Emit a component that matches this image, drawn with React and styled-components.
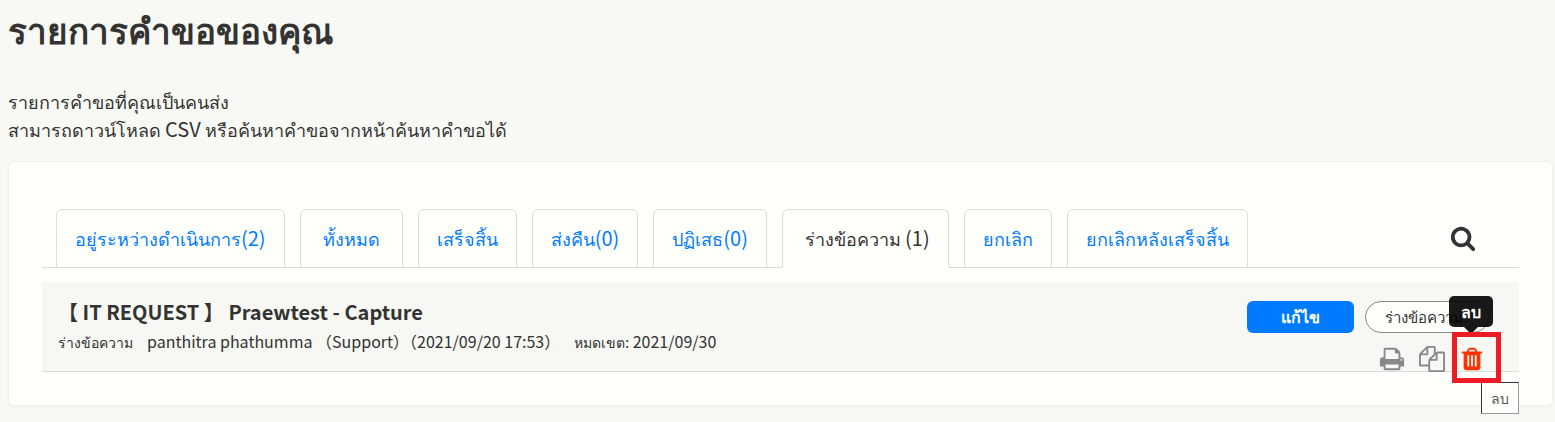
import React, { useState } from 'react'
import styled, { createGlobalStyle } from "styled-components";

const GlobalStyle = createGlobalStyle`
* {
  box-sizing: border-box;
}

body {
  margin: 0;
  background-color: #f8f8f5;
  color: #333331;
  font-family: "Noto Sans CJK JP", "Noto Sans", sans-serif;
  font-size: 18px;
  line-height: 28px;
}
`;

const Container = styled.main`
padding: 5px 2px 16px 8px;
`;

const Title = styled.h1`
margin: 0;
font-size: 35px;
line-height: 48px;
font-weight: 700;
`;

const Lead = styled.p`
margin: 34px 0 18px;
`;

const Latin = styled.span`
font-size: 20px;
line-height: 20px;
`;

const Card = styled.section`
padding: 47px 33px 33px;
background-color: #fffffc;
border: 1px solid #f0f0ec;
border-radius: 6px;
box-shadow: 0 1px 3px rgba(0, 0, 0, 0.03);
`;

const TabBar = styled.div`
display: flex;
align-items: flex-end;
justify-content: space-between;
border-bottom: 1px solid #dcdcd9;
`;

const Tabs = styled.nav`
display: flex;
gap: 15px;
margin-left: 14px;
`;

const Tab = styled.a`
height: 59px;
margin-bottom: -1px;
padding: 14px 18px;
border: 1px solid #dcdcd9;
border-bottom-color: ${(props) => (props.$active ? "#fffffc" : "#dcdcd9")};
border-radius: 6px 6px 0 0;
color: ${(props) => (props.$active ? "#333331" : "#007bff")};
text-decoration: none;
white-space: pre;
`;

const IconButton = styled.button`
display: flex;
padding: 0;
border: none;
background: none;
color: ${(props) => props.$color || "#333331"};
cursor: pointer;
`;

const SearchButton = styled(IconButton)`
margin: 0 43px 16px 0;
`;

const Row = styled.article`
display: flex;
justify-content: space-between;
height: 90px;
margin-top: 14px;
padding: 0 16px;
background-color: #f7f7f4;
border-bottom: 1px solid #dcdcd9;
`;

const RowTitle = styled.h2`
margin: 16px 0 0;
font-size: 20px;
line-height: 28px;
font-weight: 700;
white-space: pre;
`;

const Meta = styled.div`
display: flex;
align-items: baseline;
gap: 14px;
font-size: 16px;
line-height: 30px;
white-space: pre;
`;

const Small = styled.span`
font-size: 14px;
`;

const Actions = styled.div`
display: flex;
flex-direction: column;
align-items: flex-end;
padding: 19px 14px 0 0;
`;

const Buttons = styled.div`
display: flex;
gap: 11px;
`;

const EditButton = styled.button`
width: 107px;
height: 32px;
padding: 0;
border: none;
border-radius: 6px;
background-color: #007bff;
color: #fffffc;
font-family: inherit;
font-size: 16px;
font-weight: 700;
cursor: pointer;
`;

const Status = styled.span`
width: 124px;
height: 32px;
padding-left: 19px;
border: 1px solid #888886;
border-radius: 16px;
background-color: #fffffc;
font-size: 15px;
line-height: 30px;
white-space: nowrap;
`;

const Icons = styled.div`
display: flex;
gap: 14px;
margin: 13px 4px 0 0;
`;

const TrashArea = styled.div`
position: relative;
`;

const Tooltip = styled.span`
position: absolute;
bottom: 45px;
left: 50%;
width: 44px;
margin-left: -23px;
border-radius: 5px;
background-color: rgba(0, 0, 0, 0.9);
color: #fffffc;
font-size: 16px;
font-weight: 700;
line-height: 31px;
text-align: center;

&::after {
  content: "";
  position: absolute;
  top: 100%;
  left: 50%;
  margin-left: -7px;
  border: 7px solid transparent;
  border-top-color: rgba(0, 0, 0, 0.9);
  border-bottom: none;
}
`;

const Highlight = styled.div`
position: absolute;
top: -14px;
left: -7px;
width: 49px;
height: 51px;
border: 5px solid #ed1c24;
pointer-events: none;
`;

const Hint = styled.span`
position: absolute;
top: 36px;
left: 22px;
width: 38px;
border: 1px solid #999997;
border-top-color: #333331;
border-left-color: #333331;
background-color: #fffffc;
color: #575755;
font-size: 14px;
line-height: 30px;
text-align: center;
`;

const paths = {
  search: "M1216 832q0-185-131.5-316.5t-316.5-131.5-316.5 131.5-131.5 316.5 131.5 316.5 316.5 131.5 316.5-131.5 131.5-316.5zm512 832q0 52-38 90t-90 38q-54 0-90-38l-343-342q-179 124-399 124-143 0-273.5-55.5t-225-150-150-225-55.5-273.5 55.5-273.5 150-225 225-150 273.5-55.5 273.5 55.5 225 150 150 225 55.5 273.5q0 220-124 399l343 343q37 37 37 90z",
  print: "M448 1536h896v-256h-896v256zm0-640h896v-384h-160q-40 0-68-28t-28-68v-160h-640v640zm1152 64q0-26-19-45t-45-19-45 19-19 45 19 45 45 19 45-19 19-45zm128 0v416q0 13-9.5 22.5t-22.5 9.5h-224v160q0 40-28 68t-68 28h-960q-40 0-68-28t-28-68v-160h-224q-13 0-22.5-9.5t-9.5-22.5v-416q0-79 56.5-135.5t135.5-56.5h64v-544q0-40 28-68t68-28h672q40 0 88 20t76 48l152 152q28 28 48 76t20 88v256h64q79 0 135.5 56.5t56.5 135.5z",
  copy: "M1696 384q40 0 68 28t28 68v1216q0 40-28 68t-68 28h-960q-40 0-68-28t-28-68v-288h-544q-40 0-68-28t-28-68v-672q0-40 20-88t48-76l408-408q28-28 76-48t88-20h416q40 0 68 28t28 68v328q68-40 128-40h416zm-544 213l-299 299h299v-299zm-640-384l-299 299h299v-299zm196 647l316-316v-416h-384v416q0 40-28 68t-68 28h-416v640h512v-256q0-40 20-88t48-76zm956 804v-1152h-384v416q0 40-28 68t-68 28h-416v640h896z",
  trash: "M704 1376v-704q0-14-9-23t-23-9h-64q-14 0-23 9t-9 23v704q0 14 9 23t23 9h64q14 0 23-9t9-23zm256 0v-704q0-14-9-23t-23-9h-64q-14 0-23 9t-9 23v704q0 14 9 23t23 9h64q14 0 23-9t9-23zm256 0v-704q0-14-9-23t-23-9h-64q-14 0-23 9t-9 23v704q0 14 9 23t23 9h64q14 0 23-9t9-23zm-544-992h448l-48-117q-7-9-17-11h-317q-10 2-17 11zm928 32v64q0 14-9 23t-23 9h-96v948q0 83-47 143.5t-113 60.5h-832q-66 0-113-58.5t-47-141.5v-952h-96q-14 0-23-9t-9-23v-64q0-14 9-23t23-9h309l70-167q15-37 54-63t79-26h320q40 0 79 26t54 63l70 167h309q14 0 23 9t9 23z",
};

const Icon = ({ name, size = 26 }) => (
  <svg width={size} height={size} viewBox="0 0 1792 1792" fill="currentColor" aria-hidden="true">
    <path d={paths[name]} />
  </svg>
);

const tabs = [
  { label: "อยู่ระหว่างดำเนินการ", count: "(2)" },
  { label: " ทั้งหมด " },
  { label: "เสร็จสิ้น" },
  { label: "ส่งคืน", count: "(0)" },
  { label: "ปฏิเสธ", count: "(0)" },
  { label: " ร่างข้อความ ", count: "(1)" },
  { label: "ยกเลิก" },
  { label: "ยกเลิกหลังเสร็จสิ้น" },
];

const App = () => {
  const [active, setActive] = useState(5);

  const handleTab = (e, index) => {
    e.preventDefault();
    setActive(index);
  }

  return (
    <Container>
      <GlobalStyle />
      <Title>รายการคำขอของคุณ</Title>
      <Lead>
        รายการคำขอที่คุณเป็นคนส่ง<br />
        สามารถดาวน์โหลด <Latin>CSV</Latin> หรือค้นหาคำขอจากหน้าค้นหาคำขอได้
      </Lead>
      <Card>
        <TabBar>
          <Tabs>
            {tabs.map(({ label, count }, index) => (
              <Tab key={label} href="#" $active={index === active} onClick={e => handleTab(e, index)}>
                {label}{count && <Latin>{count}</Latin>}
              </Tab>
            ))}
          </Tabs>
          <SearchButton aria-label="ค้นหา"><Icon name="search" /></SearchButton>
        </TabBar>
        <Row>
          <div>
            <RowTitle>【 IT REQUEST 】 Praewtest - Capture</RowTitle>
            <Meta>
              <Small>ร่างข้อความ</Small>
              <span>panthitra phathumma （Support）（2021/09/20 17:53）</span>
              <span><Small>หมดเขต:</Small> 2021/09/30</span>
            </Meta>
          </div>
          <Actions>
            <Buttons>
              <EditButton>แก้ไข</EditButton>
              <Status>ร่างข้อความ</Status>
            </Buttons>
            <Icons>
              <IconButton $color="#888886" aria-label="พิมพ์"><Icon name="print" /></IconButton>
              <IconButton $color="#888886" aria-label="คัดลอก"><Icon name="copy" /></IconButton>
              <TrashArea>
                <IconButton $color="#ff3300" aria-label="ลบ"><Icon name="trash" /></IconButton>
                <Tooltip>ลบ</Tooltip>
                <Hint>ลบ</Hint>
                <Highlight />
              </TrashArea>
            </Icons>
          </Actions>
        </Row>
      </Card>
    </Container>
  )
}

export default App
